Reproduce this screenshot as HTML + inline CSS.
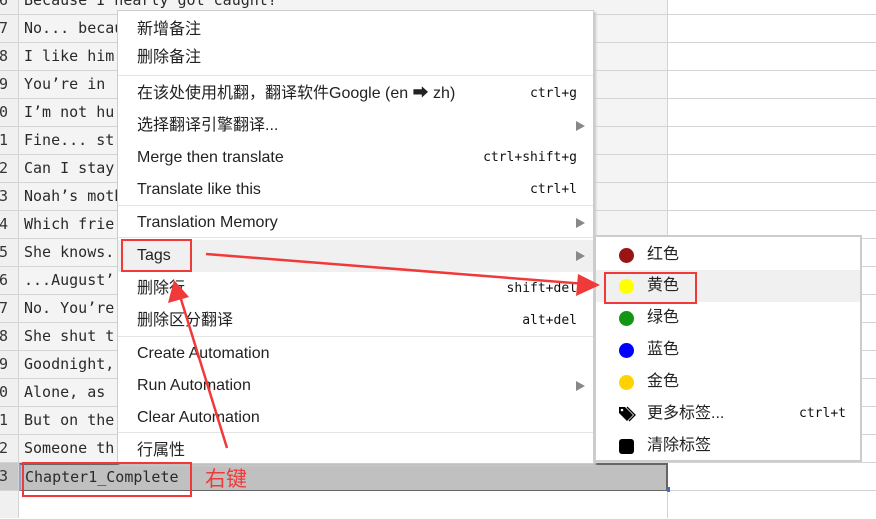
<!DOCTYPE html>
<html><head><meta charset="utf-8"><style>
body{margin:0;width:876px;height:503px;overflow:hidden;background:#fff;position:relative;font-family:"Liberation Sans","Noto Sans CJK SC",sans-serif}
.row{position:absolute;left:0;width:876px;height:28px;border-bottom:1px solid #d4d4d4;box-sizing:border-box}
.num{position:absolute;left:0;width:18px;height:27px;background:#f0f0f0;border-right:1px solid #d4d4d4;font:15px "DejaVu Sans Mono",monospace;line-height:27px;color:#333;text-indent:-1px}
.txt{position:absolute;left:19px;width:649px;height:27px;background:#f4f4f4;border-right:1px solid #d4d4d4;font:15px "DejaVu Sans Mono","Noto Sans CJK SC",monospace;line-height:27px;color:#2a2a2a;padding-left:5px;box-sizing:border-box;white-space:nowrap;overflow:hidden}
.menu{position:absolute;left:117px;top:10px;width:477px;height:454px;background:#fff;border:1px solid #ccc;box-shadow:2px 2px 2px #c8c8c8;box-sizing:border-box}
.it{position:absolute;left:0;width:100%;height:32px;font-size:16px;line-height:32px;color:#222;padding-left:19px;box-sizing:border-box}
.sc{position:absolute;right:16px;top:0;font:13px "DejaVu Sans Mono",monospace;line-height:32px;color:#111}
.ar{position:absolute;right:8px;top:11px;width:0;height:0;border-left:9px solid #888;border-top:5px solid transparent;border-bottom:5px solid transparent}
.sep{position:absolute;left:0;width:100%;height:1px;background:#e4e4e4}
.sub{position:absolute;left:594px;top:235px;width:268px;height:227px;background:#fff;border:2px solid #ccc;box-sizing:border-box}
.si{position:absolute;left:0;width:100%;height:32px;font-size:16px;line-height:32px;color:#222;padding-left:51px;box-sizing:border-box}
.dot{position:absolute;left:23px;top:9px;width:15px;height:15px;border-radius:50%}
.box{position:absolute;border:2px solid #f03a3a}
</style></head><body>
<div class="row" style="top:-13px"><div class="num">6</div><div class="txt">Because I nearly got caught?</div></div>
<div class="row" style="top:15px"><div class="num">7</div><div class="txt">No... because</div></div>
<div class="row" style="top:43px"><div class="num">8</div><div class="txt">I like him</div></div>
<div class="row" style="top:71px"><div class="num">9</div><div class="txt">You’re in</div></div>
<div class="row" style="top:99px"><div class="num">0</div><div class="txt">I’m not hu</div></div>
<div class="row" style="top:127px"><div class="num">1</div><div class="txt">Fine... st</div></div>
<div class="row" style="top:155px"><div class="num">2</div><div class="txt">Can I stay</div></div>
<div class="row" style="top:183px"><div class="num">3</div><div class="txt">Noah’s mother asked me a question</div></div>
<div class="row" style="top:211px"><div class="num">4</div><div class="txt">Which frie</div></div>
<div class="row" style="top:239px"><div class="num">5</div><div class="txt">She knows.</div></div>
<div class="row" style="top:267px"><div class="num">6</div><div class="txt">...August’</div></div>
<div class="row" style="top:295px"><div class="num">7</div><div class="txt">No. You’re</div></div>
<div class="row" style="top:323px"><div class="num">8</div><div class="txt">She shut t</div></div>
<div class="row" style="top:351px"><div class="num">9</div><div class="txt">Goodnight,</div></div>
<div class="row" style="top:379px"><div class="num">0</div><div class="txt">Alone, as</div></div>
<div class="row" style="top:407px"><div class="num">1</div><div class="txt">But on the</div></div>
<div class="row" style="top:435px"><div class="num">2</div><div class="txt">Someone th</div></div>
<div class="row" style="top:463px"><div class="num" style="background:#c8c8c8">3</div><div class="txt" style="background:#c0c0c0;border:2px solid #666;border-left:2px solid #8aa4d0;padding-left:4px;line-height:24px;height:29px;top:0">Chapter1_Complete</div></div>
<div class="row" style="top:491px;border:none"><div class="num"></div><div class="txt" style="background:#fff"></div></div>
<div style="position:absolute;left:667px;top:487px;width:3px;height:5px;background:#3a6fd8"></div>

<div class="menu">
<div class="it" style="top:3px">新增备注</div>
<div class="it" style="top:31px">删除备注</div>
<div class="sep" style="top:64px"></div>
<div class="it" style="top:67px">在该处使用机翻，翻译软件Google (en ➡ zh)<span class="sc">ctrl+g</span></div>
<div class="it" style="top:99px">选择翻译引擎翻译...<span class="ar"></span></div>
<div class="it" style="top:131px">Merge then translate<span class="sc">ctrl+shift+g</span></div>
<div class="it" style="top:163px">Translate like this<span class="sc">ctrl+l</span></div>
<div class="sep" style="top:194px"></div>
<div class="it" style="top:196px">Translation Memory<span class="ar"></span></div>
<div class="sep" style="top:226px"></div>
<div class="it" style="top:229px;background:#f0f0f0">Tags<span class="ar"></span></div>
<div class="it" style="top:262px">删除行<span class="sc">shift+del</span></div>
<div class="it" style="top:294px">删除区分翻译<span class="sc">alt+del</span></div>
<div class="sep" style="top:325px"></div>
<div class="it" style="top:327px">Create Automation</div>
<div class="it" style="top:359px">Run Automation<span class="ar"></span></div>
<div class="it" style="top:391px">Clear Automation</div>
<div class="sep" style="top:421px"></div>
<div class="it" style="top:424px">行属性</div>
</div>

<div class="sub">
<div class="si" style="top:2px"><span class="dot" style="background:#9b1414"></span>红色</div>
<div class="si" style="top:33px;background:#f0f0f0"><span class="dot" style="background:#ffff00"></span>黄色</div>
<div class="si" style="top:65px"><span class="dot" style="background:#149614"></span>绿色</div>
<div class="si" style="top:97px"><span class="dot" style="background:#0000ff"></span>蓝色</div>
<div class="si" style="top:129px"><span class="dot" style="background:#ffd200"></span>金色</div>
<div class="si" style="top:161px"><svg style="position:absolute;left:22px;top:8px" width="18" height="16" viewBox="0 0 18 16"><path d="M1 1h6l8 8-6 6-8-8z" fill="#000"/><circle cx="4" cy="4" r="1.3" fill="#fff"/><path d="M9 1l8 8-6 6" fill="none" stroke="#000" stroke-width="1.3"/></svg>更多标签...<span class="sc" style="right:14px">ctrl+t</span></div>
<div class="si" style="top:193px"><span class="dot" style="background:#000;border-radius:3px"></span>清除标签</div>
</div>

<div class="box" style="left:121px;top:239px;width:67px;height:29px"></div>
<div class="box" style="left:22px;top:462px;width:166px;height:31px"></div>
<div class="box" style="left:604px;top:272px;width:89px;height:28px"></div>
<div style="position:absolute;left:205px;top:464px;font-size:21px;color:#f03a3a;font-family:'Noto Sans CJK SC',sans-serif;line-height:28px">右键</div>

<svg style="position:absolute;left:0;top:0" width="876" height="503">
<path d="M206 254 L586 284" stroke="#f03a3a" stroke-width="2.5" fill="none"/>
<polygon points="600,285 578,274 576,296" fill="#f03a3a"/>
<path d="M227 448 L180 296" stroke="#f03a3a" stroke-width="2.5" fill="none"/>
<polygon points="174,280 168,303 189,297" fill="#f03a3a"/>
</svg>
</body></html>
